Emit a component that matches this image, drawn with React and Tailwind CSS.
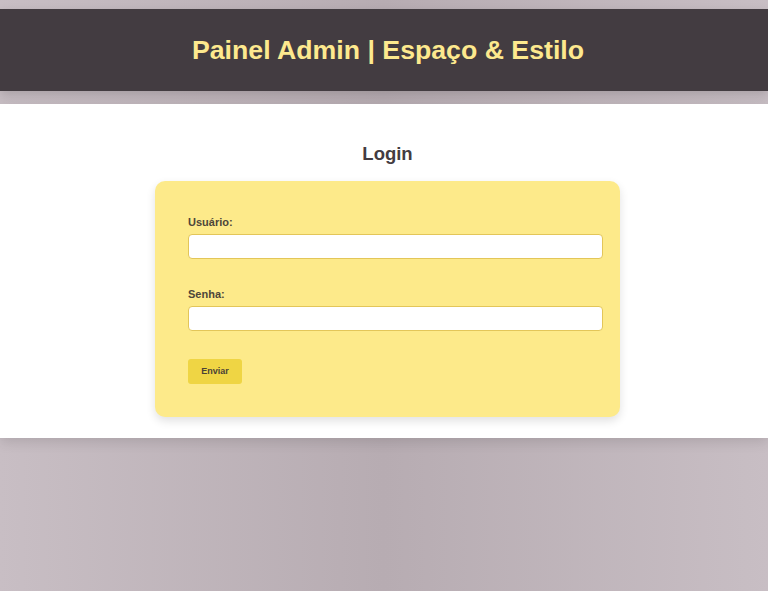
export default function App() {
  return (
    <div
      className="min-h-[591px] pt-[9px] bg-[linear-gradient(to_right,#c8bec4,#b7acb2_50%,#c8bec4)]"
      style={{ fontFamily: '"Liberation Sans", Arial, sans-serif' }}
    >
      <header className="h-[82px] pl-[8px] bg-[#433c41] flex items-center justify-center shadow-[0_4px_10px_rgba(0,0,0,0.15)]">
        <h1 className="text-[26.7px] font-bold text-[#fde98e] leading-none">
          Painel Admin | Espaço &amp; Estilo
        </h1>
      </header>
      <main className="mt-[13px] bg-white h-[334px] pt-[38px] pl-[7px] shadow-[0_4px_12px_rgba(0,0,0,0.12)]">
        <h2 className="text-[18.5px] font-bold text-[#433c41] text-center leading-[23px]">Login</h2>
        <div className="mt-[16px] mx-auto w-[465px] h-[236px] rounded-[10px] bg-[#fdea8a] px-[33px] pt-[35px] shadow-[0_4px_10px_rgba(0,0,0,0.12)]">
          <label className="block text-[11px] font-bold text-[#4d463a] leading-[13px]">Usuário:</label>
          <input
            type="text"
            className="mt-[5px] block w-[415px] h-[25px] bg-white border border-[#e3c659] rounded-[4px] outline-none"
          />
          <label className="mt-[29px] block text-[11px] font-bold text-[#4d463a] leading-[13px]">Senha:</label>
          <input
            type="password"
            className="mt-[5px] block w-[415px] h-[25px] bg-white border border-[#e3c659] rounded-[4px] outline-none"
          />
          <button className="mt-[28px] block w-[54px] h-[25px] bg-[#efd544] rounded-[3px] text-[9px] font-bold text-[#4a4236]">
            Enviar
          </button>
        </div>
      </main>
    </div>
  );
}
